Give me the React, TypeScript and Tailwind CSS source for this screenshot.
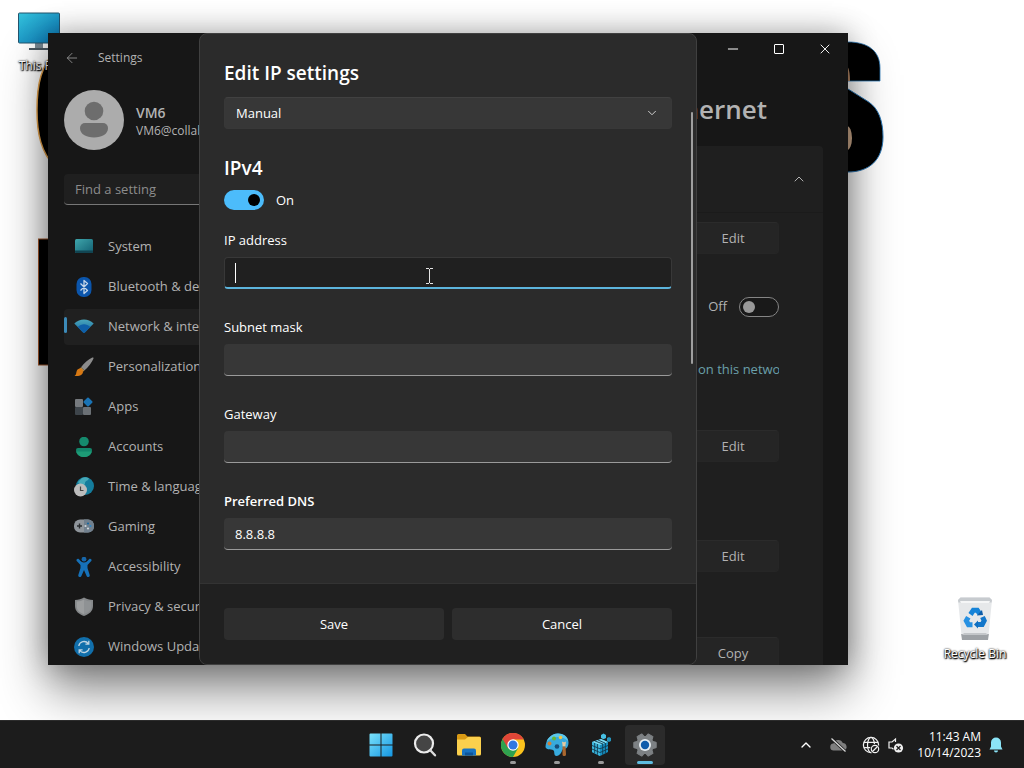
import type { ReactNode } from 'react';
import { ArrowLeft, ChevronDown, ChevronUp, Minus, X } from 'lucide-react';

type NavItem = { label: string; icon: ReactNode; active?: boolean };

const navItems: NavItem[] = [
  {
    label: 'System',
    icon: (
      <svg viewBox="0 0 20 20" className="size-5">
        <defs>
          <linearGradient id="sys" x1="0" y1="0" x2="1" y2="1">
            <stop offset="0" stopColor="#3fa6ac" />
            <stop offset="1" stopColor="#126072" />
          </linearGradient>
        </defs>
        <rect x="1" y="2" width="18" height="14" rx="1.5" fill="url(#sys)" />
        <path d="M1 13.500h18v1.300a1.200 1.200 0 0 1-1.200 1.200H2.200A1.200 1.200 0 0 1 1 14.800z" fill="#124552" />
      </svg>
    ),
  },
  {
    label: 'Bluetooth & devices',
    icon: (
      <svg viewBox="0 0 20 20" className="size-5">
        <rect x="2.500" y="0" width="15" height="20" rx="7" fill="#0b55ab" />
        <path d="M6.500 6.500l7 7-3.500 3V3.500l3.500 3-7 7" fill="none" stroke="#c4d5e8" strokeWidth="1.300" strokeLinejoin="round" />
      </svg>
    ),
  },
  {
    label: 'Network & internet',
    active: true,
    icon: (
      <svg viewBox="0 0 20 20" className="size-5">
        <defs>
          <linearGradient id="net" x1="0" y1="0" x2="0" y2="1">
            <stop offset="0" stopColor="#4aa7bd" />
            <stop offset="1" stopColor="#15689f" />
          </linearGradient>
        </defs>
        <path d="M0.300 6.500C6 1 14 1 19.700 6.500L10.900 15.600a1.300 1.300 0 0 1-1.800 0z" fill="url(#net)" />
        <path d="M3.800 10C7.500 6.300 12.500 6.300 16.200 10L10.900 15.600a1.300 1.300 0 0 1-1.800 0z" fill="#0f5fa8" />
      </svg>
    ),
  },
  {
    label: 'Personalization',
    icon: (
      <svg viewBox="0 0 20 20" className="size-5">
        <path d="M18.300.600c.9-.4 1.500.2 1.100 1.100-1.600 4-5.400 8.500-9 11.800L7 10.300C10 6.500 14.300 2.400 18.300.600z" fill="#8c8c8c" />
        <path d="M7 10.300l3.400 3.200-1.700 1.600-3.300-3.200z" fill="#b7863c" />
        <path d="M5.500 11.600c2 .2 3.400 1.600 3.500 3.500-.4 3.500-4.500 4.500-8.500 3.700 1.800-.7 1.500-2 2-4 .4-1.700 1.400-2.900 3-3.200z" fill="#d77813" />
      </svg>
    ),
  },
  {
    label: 'Apps',
    icon: (
      <svg viewBox="0 0 20 20" className="size-5">
        <rect x="1" y="2" width="8" height="8" rx="1" fill="#767a7e" />
        <rect x="1" y="10" width="8" height="8" rx="1" fill="#3e454b" />
        <rect x="9" y="10" width="8" height="8" rx="1" fill="#6b7075" />
        <rect x="10.500" y="1.500" width="7" height="7" rx="1" fill="#1973b5" transform="rotate(45 14 5)" />
      </svg>
    ),
  },
  {
    label: 'Accounts',
    icon: (
      <svg viewBox="0 0 20 20" className="size-5">
        <circle cx="10" cy="4.500" r="4.800" fill="#158a6d" />
        <path d="M4 11h12a2 2 0 0 1 2 2c0 4.500-3.500 7-8 7s-8-2.500-8-7a2 2 0 0 1 2-2z" fill="#13856a" />
        <path d="M2.200 14.500c1 3.500 4.200 5.500 7.800 5.500s6.800-2 7.800-5.500z" fill="#1d9b76" />
      </svg>
    ),
  },
  {
    label: 'Time & language',
    icon: (
      <svg viewBox="0 0 20 20" className="size-5">
        <circle cx="11" cy="9" r="9" fill="#147c9c" />
        <path d="M8 1c2-1.200 5-1 7 .5-1 2.500-4 2-4 5S5 8 4 5z" fill="#45a9b8" />
        <circle cx="6.500" cy="13" r="6.500" fill="#bcbcbc" />
        <path d="M6.500 9.500v4H9.500" fill="none" stroke="#444" strokeWidth="1.200" />
      </svg>
    ),
  },
  {
    label: 'Gaming',
    icon: (
      <svg viewBox="0 0 20 20" className="size-5">
        <rect x="0" y="2.500" width="20" height="13" rx="6" fill="#8f959b" />
        <path d="M10 2.500h4a6 6 0 0 1 6 6v1a6 6 0 0 1-6 6h-4z" fill="#71808e" />
        <path d="M3 9h5M5.500 6.500v5" stroke="#292c2f" strokeWidth="1.400" />
        <circle cx="14" cy="6.500" r="1.100" fill="#1967a0" />
        <circle cx="14" cy="11.500" r="1.100" fill="#d0d6dc" />
        <circle cx="16.500" cy="9" r="1.100" fill="#2f86c4" />
        <circle cx="11.500" cy="9" r="1.100" fill="#d0d6dc" />
      </svg>
    ),
  },
  {
    label: 'Accessibility',
    icon: (
      <svg viewBox="0 0 20 20" className="size-5">
        <circle cx="10" cy="2.200" r="2.400" fill="#1767aa" />
        <path d="M2.600 2.600c.6-1 1.600-1 2.400-.4C7 4.500 8 5.500 10 5.500s3-1 5-3.300c.8-.6 1.800-.6 2.400.4.400.8 0 1.500-.6 2L13.500 8v3l2.200 7c.2 1-.3 1.700-1.100 2-.9.200-1.600-.2-2-1L10 13l-2.600 6c-.4.800-1.100 1.200-2 1-.8-.3-1.300-1-1.100-2l2.200-7V8L3.200 4.600c-.6-.5-1-1.200-.6-2z" fill="#1671b8" />
      </svg>
    ),
  },
  {
    label: 'Privacy & security',
    icon: (
      <svg viewBox="0 0 20 20" className="size-5">
        <path d="M10 0.500c2.500 1.500 5.500 2.300 9 2.500V9c0 5-3.500 8-9 10C4.500 17 1 14 1 9V3C4.500 2.800 7.500 2 10 .500z" fill="#85888a" />
        <path d="M10 2.500c2 1.200 4.300 1.900 7.300 2.100V9c0 4-2.700 6.500-7.300 8.200z" fill="#8f9294" />
        <path d="M10 2.500C8 3.700 5.700 4.400 2.700 4.600V9c0 4 2.700 6.500 7.300 8.200z" fill="#9c9e9f" />
      </svg>
    ),
  },
  {
    label: 'Windows Update',
    icon: (
      <svg viewBox="0 0 20 20" className="size-5">
        <circle cx="10" cy="10" r="10" fill="#116fab" />
        <path d="M4.800 9a5.300 5.300 0 0 1 9.500-2.300M15.200 11a5.300 5.300 0 0 1-9.500 2.300M14.800 3.800v3.400h-3.400M5.200 16.200v-3.400h3.400" fill="none" stroke="#bfd4e2" strokeWidth="1.300" />
      </svg>
    ),
  },
];

function Wallpaper() {
  return (
    <svg className="absolute top-0 left-0" width="1024" height="400" viewBox="0 0 1024 400" aria-hidden="true">
      <path d="M60 46C40 64 37 86 37 110s4 42 18 57z" fill="#000" stroke="#e9a54c" strokeWidth="1.500" />
      <rect x="38.500" y="239" width="30" height="126" fill="#000" stroke="#a3562a" strokeWidth="1" />
      <path d="M840 42h8c20 0 32 9 32 26v13h-40z" fill="#000" stroke="#2c78b6" strokeWidth="0.800" />
      <path d="M840 81l8 8 20 12.500c11 7 15 20 15 35.500 0 23-14 35-35 35h-8z" fill="#000" stroke="#2c78b6" strokeWidth="1" />
      <path d="M845 63c4 4 5 10 5 18h-5z" fill="#b98b68" />
      <ellipse cx="847" cy="138" rx="5" ry="12" fill="#d8b493" />
    </svg>
  );
}

function Sidebar() {
  return (
    <aside className="flex w-[304px] shrink-0 flex-col px-4 pt-[9px]">
      <div className="flex items-center gap-3">
        <svg viewBox="0 0 60 60" className="size-15 shrink-0">
          <circle cx="30" cy="30" r="30" fill="#acacac" />
          <circle cx="30" cy="21" r="9.300" fill="#6d6d6d" />
          <path d="M21 33h18a5 5 0 0 1 5 5c0 6-6 9.500-14 9.500S16 44 16 38a5 5 0 0 1 5-5z" fill="#6d6d6d" />
        </svg>
        <div className="pt-0.5">
          <p className="text-[14px] leading-5 font-semibold">VM6</p>
          <p className="text-[12px] leading-4">VM6@collabs.local</p>
        </div>
      </div>
      <input
        aria-label="Find a setting"
        placeholder="Find a setting"
        className="mt-6 h-8 rounded-sm border-b border-[#777] bg-[#1f1f1f] px-[11px] text-[13px] placeholder:text-[#8c8c8c]"
      />
      <nav className="mt-6 flex flex-col gap-1">
        {navItems.map((item) => (
          <a
            key={item.label}
            href="#"
            className={`relative flex h-9 shrink-0 items-center gap-[14px] rounded-sm pl-[10px] text-[13px] whitespace-nowrap ${item.active ? 'bg-[#202020]' : ''}`}
          >
            {item.active && <span className="absolute top-2 left-0 h-4 w-[3px] rounded-full bg-[#3c8ab8]" />}
            {item.icon}
            <span>{item.label}</span>
          </a>
        ))}
      </nav>
    </aside>
  );
}

function CardButton({ children }: { children: ReactNode }) {
  return (
    <button className="h-8 w-[92px] shrink-0 rounded-sm border border-t-[#2b2b2b] border-[#262626] bg-[#252525] pt-px text-center text-[13px]">
      {children}
    </button>
  );
}

function EthernetPage() {
  return (
    <main className="flex min-w-0 flex-1 flex-col pt-[10px] pr-[25px]">
      <h1 className="pr-14 text-right text-[26px] leading-9 font-semibold">Ethernet</h1>
      <section className="mt-[19px] flex flex-1 flex-col rounded-t-sm bg-[#1f1f1f]">
        <div className="flex h-[67px] items-center justify-end border-b border-[#1b1b1b] pr-4">
          <button aria-label="Collapse">
            <ChevronUp className="size-4" strokeWidth={1.5} />
          </button>
        </div>
        <div className="flex flex-col items-end pt-[9px] pr-11">
          <CardButton>Edit</CardButton>
          <label className="mt-[43px] flex h-5 items-center gap-3 text-[13px]">
            Off
            <input
              type="checkbox"
              role="switch"
              className="h-5 w-10 appearance-none rounded-full border border-[#858585] bg-[#191919] before:mt-[3px] before:ml-[3px] before:block before:size-3 before:rounded-full before:bg-[#999] before:content-['']"
            />
          </label>
          <a href="#" className="mt-[42px] w-[81px] overflow-hidden text-[13px] leading-5 whitespace-nowrap text-[#6ba0aa]">
            on this network
          </a>
          <div className="mt-[51px] flex flex-col gap-[78px]">
            <CardButton>Edit</CardButton>
            <CardButton>Edit</CardButton>
          </div>
          <div className="mt-[65px] flex flex-col">
            <CardButton>Copy</CardButton>
          </div>
        </div>
      </section>
    </main>
  );
}

type FieldProps = { id: string; label: string; value?: string; focused?: boolean; strong?: boolean };

function Field({ id, label, value = '', focused = false, strong = false }: FieldProps) {
  return (
    <div className="flex flex-col gap-[7px]">
      <label htmlFor={id} className={`text-[13px] leading-5 ${strong ? 'font-semibold' : ''}`}>
        {label}
      </label>
      <div className="relative flex">
        <input
          id={id}
          defaultValue={value}
          className={`h-8 w-full rounded-sm px-[11px] text-[13px] outline-none ${
            focused
              ? 'border border-b-2 border-[#383838] border-b-[#5cb4dc] bg-[#202020]'
              : 'border-b border-[#9a9a9a] bg-[#373737]'
          }`}
        />
        {focused && <span className="absolute top-[6px] left-[11px] h-5 w-px bg-white" />}
      </div>
    </div>
  );
}

function EditDialog() {
  return (
    <div
      role="dialog"
      aria-label="Edit IP settings"
      className="absolute inset-y-0 left-[151px] flex w-[498px] flex-col overflow-hidden rounded-lg border border-[#404040] bg-[#2b2b2b] text-white"
    >
      <div className="flex-1 px-6 pt-[25px]">
        <h2 className="text-[19px] leading-7 font-semibold">Edit IP settings</h2>
        <div className="relative mt-[10px] flex">
          <select
            aria-label="IP assignment"
            className="h-8 w-full appearance-none rounded-sm border border-[#383838] border-t-[#414141] bg-[#373737] px-[11px] pt-px text-[13px]"
          >
            <option>Manual</option>
          </select>
          <ChevronDown className="pointer-events-none absolute top-[9px] right-[13px] size-[14px] text-[#cfcfcf]" strokeWidth={1.7} />
        </div>
        <h3 className="mt-[25px] text-[19px] leading-7 font-semibold">IPv4</h3>
        <label className="mt-2 flex h-5 items-center gap-3 text-[13px]">
          <input
            type="checkbox"
            role="switch"
            defaultChecked
            className="h-5 w-10 appearance-none rounded-full bg-[#4cbcfb] before:mt-1 before:ml-6 before:block before:size-3 before:rounded-full before:bg-black before:content-['']"
          />
          <span className="pt-0.5">On</span>
        </label>
        <div className="mt-5 flex flex-col gap-7">
          <Field id="ip" label="IP address" focused />
          <Field id="mask" label="Subnet mask" />
          <Field id="gateway" label="Gateway" />
          <Field id="dns" label="Preferred DNS" value="8.8.8.8" strong />
        </div>
      </div>
      <div className="grid grid-cols-2 gap-2 border-t border-[#333] bg-[#202020] px-6 pt-6 pb-6">
        <button className="h-8 rounded-sm bg-[#2d2d2d] pt-px text-[13px]">Save</button>
        <button className="h-8 rounded-sm bg-[#2d2d2d] pt-px text-[13px]">Cancel</button>
      </div>
      <span className="absolute top-[78px] right-[3px] h-[252px] w-[2px] rounded-full bg-[#9f9f9f]" />
    </div>
  );
}

function SettingsWindow() {
  return (
    <div className="absolute top-[33px] left-12 flex h-[632px] w-[800px] flex-col overflow-hidden bg-[#171717] text-[#b2b2b2] shadow-[0_26px_46px_rgba(0,0,0,0.45),0_0_28px_rgba(0,0,0,0.3)]">
      <header className="flex h-12 shrink-0 justify-between">
        <div className="flex items-center gap-[18px] pt-px pl-4">
          <button aria-label="Back">
            <ArrowLeft className="size-4 text-[#8d8d8d]" strokeWidth={1.4} />
          </button>
          <span className="text-[12px]">Settings</span>
        </div>
        <div className="flex h-8 text-white">
          <button aria-label="Minimize" className="grid w-[46px] place-items-center">
            <Minus className="size-4" strokeWidth={1.5} />
          </button>
          <button aria-label="Maximize" className="grid w-[46px] place-items-center">
            <span className="size-[10px] rounded-[1px] border border-white" />
          </button>
          <button aria-label="Close" className="grid w-[46px] place-items-center">
            <X className="size-4" strokeWidth={1.4} />
          </button>
        </div>
      </header>
      <div className="flex min-h-0 flex-1">
        <Sidebar />
        <EthernetPage />
      </div>
      <EditDialog />
    </div>
  );
}

const desktopText =
  'text-[12px] leading-4 whitespace-nowrap text-white [text-shadow:0_1px_2px_#000,0_0_2px_#000,1px_1px_1px_#000]';

function DesktopIcons() {
  return (
    <>
      <div className="absolute top-3 left-[1px] flex w-[76px] flex-col items-center">
        <svg viewBox="0 0 42 40" className="h-10 w-[42px]">
          <defs>
            <linearGradient id="pc" x1="0" y1="0" x2="1" y2="1">
              <stop offset="0" stopColor="#35c3dc" />
              <stop offset="1" stopColor="#0a75b5" />
            </linearGradient>
          </defs>
          <rect x="17" y="30" width="8" height="7" fill="#7b8b96" />
          <rect x="11" y="36" width="20" height="2" fill="#4b5963" />
          <rect x="0.500" y="1" width="41" height="30" rx="1" fill="url(#pc)" stroke="#24546d" />
        </svg>
        <span className={`mt-[6px] ${desktopText}`}>This PC</span>
      </div>
      <div className="absolute top-[596px] right-[11px] flex w-[76px] flex-col items-center">
        <svg viewBox="0 0 40 46" className="h-[46px] w-10">
          <path d="M3 4l2.500-2.500h29L37 4l-4 40H7z" fill="#e6e8ea" />
          <path d="M3 4l2.500-2.500h29L37 4l-.4 2.500H3.400z" fill="#c7cbcf" />
          <path d="M5 5h30l-1 2H6z" fill="#f5f6f7" />
          <path d="M6.200 38h27.600L33 44H7z" fill="#9da1a5" />
          <path d="M9 37h22l2 2H7z" fill="#c3c6c9" />
          <g fill="none" stroke="#1683d8" strokeWidth="5">
            <path d="M15.500 18.500l2.800-4.200h4l2.500 3.600" />
            <path d="M27.500 21l1.700 3.700-2 3.800h-5" stroke="#1477ca" />
            <path d="M17.500 28.700h-4l-2.200-4 2-3.500" stroke="#2791e2" />
          </g>
          <path d="M22 19.500l6-.500-1-5z" fill="#0d5ca8" />
          <path d="M23 24.500v8l-4-4z" fill="#0f6fc0" />
        </svg>
        <span className={`mt-1 ${desktopText}`}>Recycle Bin</span>
      </div>
    </>
  );
}

function CogShape() {
  return (
    <svg viewBox="0 0 24 24" className="size-6">
      <g fill="#7d8184" stroke="#7d8184" strokeWidth="1" strokeLinejoin="round">
        <circle cx="12" cy="12" r="8.600" />
        {[0, 60, 120, 180, 240, 300].map((angle) => (
          <path key={angle} d="M8.300 5L9.300 0.800h5.400l1 4.200z" transform={`rotate(${angle + 30} 12 12)`} />
        ))}
      </g>
      <circle cx="12" cy="12" r="6" fill="#e6edf2" />
      <circle cx="12" cy="12" r="4.200" fill="#0f5cab" />
    </svg>
  );
}

const apps: { name: string; icon: ReactNode; state?: 'open' | 'active' }[] = [
  {
    name: 'Start',
    icon: (
      <svg viewBox="0 0 24 24" className="size-6">
        <defs>
          <linearGradient id="win" x1="0" y1="0" x2="1" y2="1">
            <stop offset="0" stopColor="#7be2fb" />
            <stop offset="1" stopColor="#1496e2" />
          </linearGradient>
        </defs>
        <path d="M0.500 1.500a1 1 0 0 1 1-1h10v11h-11zM12.500.500h10a1 1 0 0 1 1 1v10h-11zM.500 12.500h11v11h-10a1 1 0 0 1-1-1zM12.500 12.500h11v10a1 1 0 0 1-1 1h-10z" fill="url(#win)" />
      </svg>
    ),
  },
  {
    name: 'Search',
    icon: (
      <svg viewBox="0 0 24 24" className="size-6">
        <circle cx="11" cy="10.500" r="9" fill="#454545" stroke="#ececec" strokeWidth="2.200" />
        <path d="M17.500 17.500l4.500 4.800" stroke="#dcdcdc" strokeWidth="2.400" strokeLinecap="round" />
      </svg>
    ),
  },
  {
    name: 'File Explorer',
    icon: (
      <svg viewBox="0 0 24 24" className="size-6">
        <path d="M0 2.500A1.500 1.500 0 0 1 1.500 1H8l2.500 2.500H22.500A1.500 1.500 0 0 1 24 5v10H0z" fill="#d99a14" />
        <path d="M0 6.500h8l3-2.500h11.500A1.500 1.500 0 0 1 24 5.500v15.500a1.500 1.500 0 0 1-1.500 1.500h-21A1.500 1.500 0 0 1 0 21z" fill="#fbd04d" />
        <path d="M5 22.500V17.500a2 2 0 0 1 2-2h10a2 2 0 0 1 2 2v5z" fill="#1873c2" />
        <path d="M8 19.500h8v3H8z" fill="#0d5499" />
      </svg>
    ),
  },
  {
    name: 'Chrome',
    state: 'open',
    icon: (
      <svg viewBox="0 0 24 24" className="size-6">
        <circle cx="12" cy="12" r="12" fill="#fbc31d" />
        <path d="M12 12L1.600 6A12 12 0 0 0 12 24l5.200-9z" fill="#2fa24f" />
        <path d="M12 6.500h10.700A12 12 0 0 0 1.600 6l5.300 9z" fill="#e04638" />
        <circle cx="12" cy="12" r="5.700" fill="#fff" />
        <circle cx="12" cy="12" r="4.500" fill="#3078e0" />
      </svg>
    ),
  },
  {
    name: 'Paint',
    state: 'open',
    icon: (
      <svg viewBox="0 0 24 24" className="size-6">
        <path d="M13 .500C19 .500 23.500 4 23.500 9.500c0 5-3 7-6 7-1 3-2.500 6-6 6.500-2.500 0-2-3-2.500-5-1-2.500-8-.500-8.500-4C.500 7 6 .500 13 .500z" fill="#37aadd" />
        <path d="M13 .500C8 .500 3.500 4 1.500 8.500 5 6 9 4 13 4s7 1.500 10 4C22.500 3.500 18.500.500 13 .500z" fill="#5cc7ea" />
        <circle cx="9" cy="5.500" r="2" fill="#67b637" />
        <circle cx="4.500" cy="10.500" r="2" fill="#cf7e36" />
        <circle cx="15.500" cy="4.500" r="1.800" fill="#f0c342" />
        <circle cx="12" cy="13.500" r="2.300" fill="#164f7c" />
        <path d="M17 8.500c1 1 3 1 4 0l-.7 5h-2.600z" fill="#e4c9a0" />
        <path d="M17.500 13.500h3l.5 8c0 2-3.500 2-3.500 0z" fill="#a9672f" />
      </svg>
    ),
  },
  {
    name: 'Registry Editor',
    state: 'open',
    icon: (
      <svg viewBox="0 0 24 24" className="size-6">
        <path d="M3 9l9-3 7 3v10l-8 4-8-4z" fill="#168fc1" />
        <path d="M3 9l8 3v11l-8-4z" fill="#3bb6dd" />
        <path d="M3 9l9-3 7 3-8 3z" fill="#7ddcf2" />
        <path d="M5.700 10v10.300M8.400 11v10.800M3 12.500l8 3.300 8-3.300M3 16l8 3.500 8-3.500M13.700 11v10.700M16.400 10v10.300M6 8l8 3M9 7l7 3" stroke="#123b50" strokeWidth="0.900" fill="none" />
        <path d="M12 2l2.500-1.500L17 2v3l-2.500 1.300L12 5z" fill="#47bfe2" />
        <path d="M18 5l2-1 2 1v3l-2 1-2-1z" fill="#2594bd" />
      </svg>
    ),
  },
  { name: 'Settings', state: 'active', icon: <CogShape /> },
];

function Taskbar() {
  return (
    <footer className="grid h-12 shrink-0 grid-cols-[1fr_auto_1fr] items-center border-t border-[#2c2c2c] bg-[#1c1c1c] pl-0.5 text-white">
      <span />
      <div className="flex gap-1">
        {apps.map((app) => (
          <button
            key={app.name}
            aria-label={app.name}
            className={`relative grid size-10 place-items-center rounded ${app.state === 'active' ? 'bg-[#2b2b2b]' : ''}`}
          >
            {app.icon}
            {app.state === 'open' && <span className="absolute bottom-px left-[17px] h-[3px] w-[6px] rounded-full bg-[#9a9a9a]" />}
            {app.state === 'active' && <span className="absolute bottom-px left-3 h-[3px] w-4 rounded-full bg-[#5ebce0]" />}
          </button>
        ))}
      </div>
      <div className="flex items-center justify-end pr-[21px]">
        <button aria-label="Show hidden icons" className="mr-4">
          <ChevronUp className="size-4" strokeWidth={2} />
        </button>
        <svg viewBox="0 0 18 16" className="mr-[14px] h-4 w-[18px]">
          <path d="M4 13.500a3.500 3.500 0 0 1-.5-7A5 5 0 0 1 12.800 6a4 4 0 0 1 1.700 7.500z" fill="#7e7e7e" />
          <path d="M1.500 1.500l14 13" stroke="#1c1c1c" strokeWidth="3" />
          <path d="M1.500 1.500l14 13" stroke="#d8d8d8" strokeWidth="1.300" />
        </svg>
        <svg viewBox="0 0 18 18" className="mr-[7px] size-[18px]" fill="none" stroke="#f0f0f0" strokeWidth="1.200">
          <circle cx="9" cy="9" r="7.600" />
          <ellipse cx="9" cy="9" rx="3.500" ry="7.600" />
          <path d="M2 6.300h14M2 11.700h8" />
          <circle cx="13" cy="13" r="5" fill="#1c1c1c" stroke="none" />
          <circle cx="13" cy="13" r="3.700" />
          <path d="M10.500 15.500l5-5" />
        </svg>
        <svg viewBox="0 0 18 18" className="mr-3 size-[18px]" fill="none" stroke="#f0f0f0" strokeWidth="1.200">
          <path d="M8.500 6V3L5 6H2v6h3l1.500 1.300" />
          <circle cx="11.500" cy="12" r="4.600" fill="#f0f0f0" stroke="none" />
          <path d="M9.500 10l4 4M13.500 10l-4 4" stroke="#1c1c1c" />
        </svg>
        <div className="mr-2 text-right text-[12px] leading-4">
          <p>11:43 AM</p>
          <p>10/14/2023</p>
        </div>
        <svg viewBox="0 0 14 16" className="h-4 w-[14px]" fill="#8be4f7">
          <path d="M7 .500a5 5 0 0 0-5 5v4L.500 12.500h13L12 9.500v-4a5 5 0 0 0-5-5zM5 13.500h4a2 2 0 0 1-4 0z" />
        </svg>
      </div>
    </footer>
  );
}

export default function App() {
  return (
    <div className="flex h-screen flex-col overflow-hidden bg-white font-['Open_Sans','Noto_Sans',sans-serif]">
      <div className="relative min-h-0 flex-1 overflow-hidden">
        <Wallpaper />
        <DesktopIcons />
        <SettingsWindow />
        <svg className="absolute top-[268px] left-[425px] h-4 w-[9px]" viewBox="0 0 9 16" fill="none" stroke="#e6e6e6" aria-hidden="true">
          <path d="M1 0.500h3M5 0.500h3M4.500 1v14M1 15.500h3M5 15.500h3" />
        </svg>
      </div>
      <Taskbar />
    </div>
  );
}
